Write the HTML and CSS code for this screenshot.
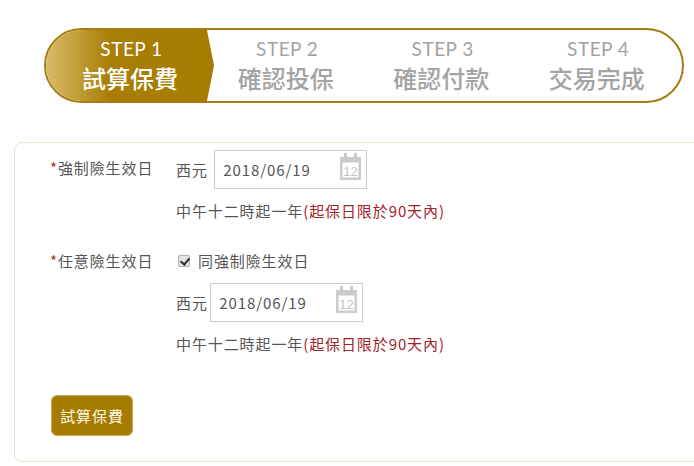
FILE: index.html
```html
<!DOCTYPE html>
<html lang="zh-Hant">
<head>
<meta charset="utf-8">
<title>試算保費</title>
<link rel="stylesheet" href="styles.css">
</head>
<body>
<nav class="stepper">
  <div class="step step-active"><span class="step-no">STEP 1</span><span class="step-name">試算保費</span></div>
  <div class="step step-second"><span class="step-no">STEP 2</span><span class="step-name">確認投保</span></div>
  <div class="step"><span class="step-no">STEP 3</span><span class="step-name">確認付款</span></div>
  <div class="step"><span class="step-no">STEP 4</span><span class="step-name">交易完成</span></div>
</nav>
<form class="card">
  <div class="row">
    <div class="label"><span class="star">*</span>強制險生效日</div>
    <div class="fields">
      <div class="date-line">
        <span>西元</span>
        <div class="date-box">
          <input class="date-input" type="text" value="2018/06/19">
          <svg class="cal-icon" viewBox="0 0 21 27" aria-hidden="true">
            <path fill="#cbcbcb" d="M4 0h3v4h7V0h3v4h4v23H0V4h4z"/>
            <rect fill="#fff" x="2.5" y="9.5" width="16" height="15"/>
            <text x="10.5" y="22.5" text-anchor="middle" class="cal-num">12</text>
          </svg>
        </div>
      </div>
      <p class="note">中午十二時起一年<span class="warn">(起保日限於90天內)</span></p>
    </div>
  </div>
  <div class="row row-second">
    <div class="label label-second"><span class="star">*</span>任意險生效日</div>
    <div class="fields">
      <label class="same"><input class="check" type="checkbox" checked><span>同強制險生效日</span></label>
      <div class="date-line date-line-tight">
        <span>西元</span>
        <div class="date-box">
          <input class="date-input" type="text" value="2018/06/19">
          <svg class="cal-icon" viewBox="0 0 21 27" aria-hidden="true">
            <path fill="#cbcbcb" d="M4 0h3v4h7V0h3v4h4v23H0V4h4z"/>
            <rect fill="#fff" x="2.5" y="9.5" width="16" height="15"/>
            <text x="10.5" y="22.5" text-anchor="middle" class="cal-num">12</text>
          </svg>
        </div>
      </div>
      <p class="note">中午十二時起一年<span class="warn">(起保日限於90天內)</span></p>
    </div>
  </div>
  <button class="submit" type="button">試算保費</button>
</form>
</body>
</html>
```
FILE: styles.css
```css
* { box-sizing: border-box; }
html, body { margin: 0; padding: 0; height: 100%; overflow: hidden; background: #fff; }
body {
  padding: 28px 0 0 14px;
  font-family: "Noto Sans CJK TC", "Open Sans", sans-serif;
  font-size: 15px;
  letter-spacing: .9px;
  color: #555;
}
.stepper {
  display: flex;
  width: 640px;
  height: 75px;
  margin-left: 30px;
  padding-right: 9px;
  border: 2px solid #a67c12;
  border-radius: 38px;
  overflow: hidden;
  background: #fff;
}
.step {
  flex: 0 0 155.5px;
  display: flex;
  flex-direction: column;
  align-items: center;
  padding-top: 5px;
  color: #a3a3a3;
  letter-spacing: 0;
}
.step-active {
  flex: 0 0 168px;
  color: #fff;
  background: linear-gradient(90deg, #d9bc68 0%, #a97e07 38%, #a67c00 100%);
  clip-path: polygon(0 0, 161px 0, 168px 50%, 161px 100%, 0 100%);
}
.step-second { margin-left: -6px; }
.step-no {
  padding-left: 3px;
  font-family: Lato, sans-serif;
  font-weight: 400;
  font-size: 19px;
  line-height: 27px;
  letter-spacing: .5px;
}
.step-name {
  font-size: 24px;
  font-weight: 500;
  line-height: 32px;
  letter-spacing: 0;
}
.card {
  width: 720px;
  height: 320px;
  margin-top: 39px;
  padding: 7px 0 0 35px;
  border: 1px solid #e8e4cf;
  border-radius: 8px;
}
.row { display: flex; }
.row-second { margin-top: 28px; }
.label { flex: 0 0 126px; padding-top: 7px; line-height: 22px; }
.label-second { padding-top: 0; }
.star { color: #a33; }
.fields { display: flex; flex-direction: column; }
.date-line { display: flex; align-items: center; gap: 6.5px; }
.date-line-tight { gap: 2.5px; margin-top: 12px; }
.date-box { position: relative; width: 153px; height: 39px; }
.date-input {
  width: 100%;
  height: 100%;
  padding: 0 8px;
  border: 1px solid #ccc;
  background: #fff;
  font: 15px/1 "Noto Sans CJK TC", "Open Sans", sans-serif;
  letter-spacing: .9px;
  color: #555;
}
.cal-icon { position: absolute; top: 3px; right: 6px; width: 21px; height: 27px; }
.cal-num { font: 13px "Liberation Sans", sans-serif; fill: #c4c4c4; letter-spacing: 0; }
.note { margin: 11px 0 0; line-height: 22px; }
.warn { color: #a2222a; }
.same { display: flex; align-items: center; gap: 8px; height: 21px; }
.check {
  appearance: none;
  position: relative;
  width: 12px;
  height: 12px;
  margin: 0 0 0 2px;
  border: 1px solid #b0b0b0;
  border-radius: 2px;
  background: #e4e4e4;
}
.check:checked::after {
  content: "";
  position: absolute;
  left: 3px;
  top: 0;
  width: 4px;
  height: 7px;
  border: solid #333;
  border-width: 0 2px 2px 0;
  transform: rotate(40deg);
}
.submit {
  display: block;
  width: 82px;
  height: 41px;
  margin: 40px 0 0 1px;
  padding: 0;
  border: 1px solid #c9a850;
  border-radius: 6px;
  background: #a67c00;
  color: #fff8e6;
  font: 15px "Noto Sans CJK TC", "Open Sans", sans-serif;
  letter-spacing: .9px;
}
```
